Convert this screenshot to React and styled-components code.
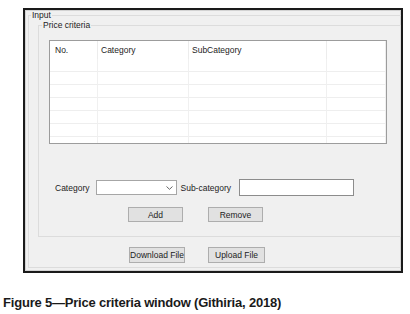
import styled, { createGlobalStyle } from "styled-components";

const GlobalStyle = createGlobalStyle`
  html, body {
    margin: 0;
    padding: 0;
    background: #ffffff;
  }
  body {
    font-family: "Liberation Sans", Arial, sans-serif;
  }
`;

const Page = styled.div`
  width: 410px;
  height: 314px;
  padding: 8px 0 0 23px;
  box-sizing: border-box;
  background: #ffffff;
`;

const Window = styled.div`
  width: 380px;
  height: 265px;
  box-sizing: border-box;
  border: 2px solid #1a1a1a;
  box-shadow: inset 0 0 0 1px #d2d2d2;
  background: #f0f0f0;
  overflow: hidden;
  font-size: 8.5px;
  color: #1c1c1c;
`;

const Group = styled.fieldset`
  margin: 0;
  padding: 0;
  border: 1px solid #dcdcdc;
  border-right: ${(p) => (p.$openRight ? "none" : "1px solid #dcdcdc")};
  min-inline-size: 0;
  box-sizing: border-box;
`;

const OuterGroup = styled(Group)`
  margin: 0 0 0 3px;
`;

const Legend = styled.legend`
  margin-left: ${(p) => p.$offset}px;
  padding: 0 1px;
  height: 10px;
  line-height: 10px;
  font-size: 8.5px;
  color: #1c1c1c;
`;

const OuterBody = styled.div`
  padding: 0 0 4px 9px;
`;

const InnerBody = styled.div`
  padding: 10px 0 14px 10px;
`;

const ListView = styled.div`
  width: 338px;
  height: 104px;
  box-sizing: border-box;
  border: 1px solid #9c9c9c;
  background: #ffffff;
  display: grid;
  grid-template-columns: 48px 91px 138px 1fr;
  grid-template-rows: 18px repeat(7, 13px);
  overflow: hidden;
`;

const HeadCell = styled.div`
  border-right: 1px solid #ececec;
  padding-left: 3px;
  display: flex;
  align-items: center;
  font-size: 8.5px;
  color: #1c1c1c;

  &:first-child {
    padding-left: 5px;
  }
`;

const Cell = styled.div`
  border-right: 1px solid #f0f0f0;
  border-bottom: 1px solid #eeeeee;
`;

const FormRow = styled.div`
  margin-top: 35px;
  padding-left: 6px;
  height: 17px;
  display: flex;
  align-items: center;
`;

const Label = styled.span`
  margin: ${(p) => p.$margin};
  white-space: nowrap;
`;

const Combo = styled.div`
  width: 81px;
  height: 15px;
  box-sizing: border-box;
  border: 1px solid #a6a6a6;
  background: #ffffff;
  display: flex;
  align-items: center;
  justify-content: flex-end;
  padding-right: 3px;
`;

const TextBox = styled.div`
  width: 115px;
  height: 17px;
  box-sizing: border-box;
  border: 1px solid #8c8c8c;
  background: #ffffff;
`;

const ButtonRow = styled.div`
  margin-top: ${(p) => p.$top}px;
  padding-left: ${(p) => p.$left}px;
  display: flex;
  gap: ${(p) => p.$gap}px;
`;

const Button = styled.button`
  width: ${(p) => p.$w}px;
  height: ${(p) => p.$h}px;
  margin: 0;
  padding: 0;
  box-sizing: border-box;
  border: 1px solid #adadad;
  background: #e1e1e1;
  font-family: "Liberation Sans", Arial, sans-serif;
  font-size: 8.5px;
  color: #1c1c1c;
  text-align: center;
`;

const Caption = styled.div`
  margin-top: 22px;
  margin-left: -20px;
  font-size: 13px;
  line-height: 15px;
  font-weight: 700;
  letter-spacing: -0.2px;
  color: #1a1a1a;
  white-space: nowrap;
`;

const columns = ["No.", "Category", "SubCategory", ""];
const rowCount = 7;

function Chevron() {
  return (
    <svg width="7" height="4" viewBox="0 0 7 4">
      <path d="M0.5 0.5 L3.5 3.3 L6.5 0.5" fill="none" stroke="#555" strokeWidth="0.9" />
    </svg>
  );
}

export default function App() {
  return (
    <Page>
      <GlobalStyle />
      <Window>
        <OuterGroup $openRight>
          <Legend $offset={2}>Input</Legend>
          <OuterBody>
            <Group $openRight={false}>
              <Legend $offset={3}>Price criteria</Legend>
              <InnerBody>
                <ListView>
                  {columns.map((c, i) => (
                    <HeadCell key={"h" + i}>{c}</HeadCell>
                  ))}
                  {Array.from({ length: rowCount * columns.length }).map((_, i) => (
                    <Cell key={i} />
                  ))}
                </ListView>
                <FormRow>
                  <Label $margin="0 6px 0 0">Category</Label>
                  <Combo>
                    <Chevron />
                  </Combo>
                  <Label $margin="0 8px 0 4px">Sub-category</Label>
                  <TextBox />
                </FormRow>
                <ButtonRow $top={11} $left={79} $gap={25}>
                  <Button $w={55} $h={15}>Add</Button>
                  <Button $w={55} $h={15}>Remove</Button>
                </ButtonRow>
              </InnerBody>
            </Group>
            <ButtonRow $top={10} $left={91} $gap={23}>
              <Button $w={56} $h={16}>Download File</Button>
              <Button $w={57} $h={16}>Upload File</Button>
            </ButtonRow>
          </OuterBody>
        </OuterGroup>
      </Window>
      <Caption>Figure 5—Price criteria window (Githiria, 2018)</Caption>
    </Page>
  );
}
